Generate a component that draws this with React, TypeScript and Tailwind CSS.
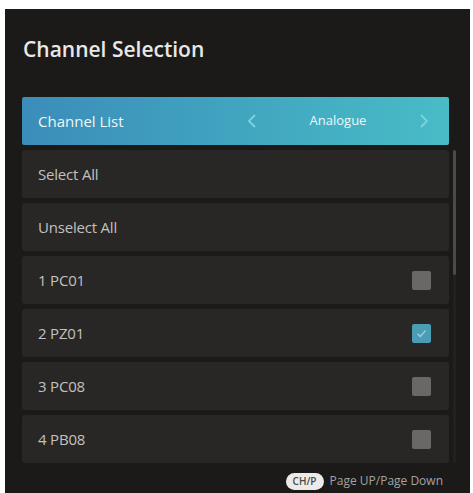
const channels = [
  { name: "1 PC01", checked: false },
  { name: "2 PZ01", checked: true },
  { name: "3 PC08", checked: false },
  { name: "4 PB08", checked: false },
];

const Checkbox = ({ checked }: { checked: boolean }) =>
  checked ? (
    <div className="flex h-[19px] w-[19px] items-center justify-center rounded-[2px] bg-[#4a9db4]">
      <svg width="13" height="13" viewBox="0 0 13 13" fill="none">
        <polyline points="2.5,6.8 5.3,9.5 10.5,3.5" stroke="#8fd2de" strokeWidth="1.5" />
      </svg>
    </div>
  ) : (
    <div className="h-[19px] w-[19px] rounded-[2px] bg-[#696867]" />
  );

const Row = ({ children }: { children: React.ReactNode }) => (
  <div className="flex h-[48px] items-center justify-between rounded-[3px] bg-[#292725] pl-[16px] pr-[18px] text-[15px] tracking-[-0.2px] text-[#c2c1bf]">
    {children}
  </div>
);

export default function App() {
  return (
    <div
      className="flex h-[493px] w-[473px] bg-white pl-[5px] pr-[3px] pt-[9px]"
      style={{ fontFamily: '"Open Sans", "Noto Sans", sans-serif' }}
    >
      <div className="flex flex-1 flex-col bg-[#1c1a19] pt-[26px]">
        <h1 className="pl-[18px] text-[21px] font-semibold leading-[28px] text-[#e8e8e6]">
          Channel Selection
        </h1>

        <div className="mt-[34px] flex">
          <div className="ml-[17px] flex w-[427px] flex-col gap-[5px]">
            <div className="flex h-[48px] items-center rounded-[2px] bg-linear-to-r from-[#3b8db9] to-[#48bcc6] pl-[16px] pr-[20px] text-[#eef7f8]">
              <span className="flex-1 text-[15px]">Channel List</span>
              <svg width="10" height="16" viewBox="0 0 10 16" fill="none" className="mr-[46px]">
                <polyline points="8,2 2,8 8,14" stroke="#7dd3dc" strokeWidth="1.8" />
              </svg>
              <span className="w-[70px] text-center text-[13px]">Analogue</span>
              <svg width="10" height="16" viewBox="0 0 10 16" fill="none" className="ml-[46px]">
                <polyline points="2,2 8,8 2,14" stroke="#7dd3dc" strokeWidth="1.8" />
              </svg>
            </div>
            <Row>Select All</Row>
            <Row>Unselect All</Row>
            {channels.map((c) => (
              <Row key={c.name}>
                <span>{c.name}</span>
                <Checkbox checked={c.checked} />
              </Row>
            ))}
          </div>
          <div className="ml-[4px] mt-[53px] flex w-[4px] flex-col">
            <div className="h-[125px] w-[3px] rounded-full bg-[#4b4a48]" />
            <div className="h-[188px] w-[3px] bg-[#232120]" />
          </div>
        </div>

        <div className="mt-[9px] flex items-center justify-end gap-[6px] pr-[27px]">
          <span className="flex h-[17px] w-[38px] items-center justify-center rounded-full bg-[#ecebea] text-[10px] font-semibold text-[#4a4a4a]">
            CH/P
          </span>
          <span className="text-[12px] text-[#a3a2a0]">Page UP/Page Down</span>
        </div>
      </div>
    </div>
  );
}
